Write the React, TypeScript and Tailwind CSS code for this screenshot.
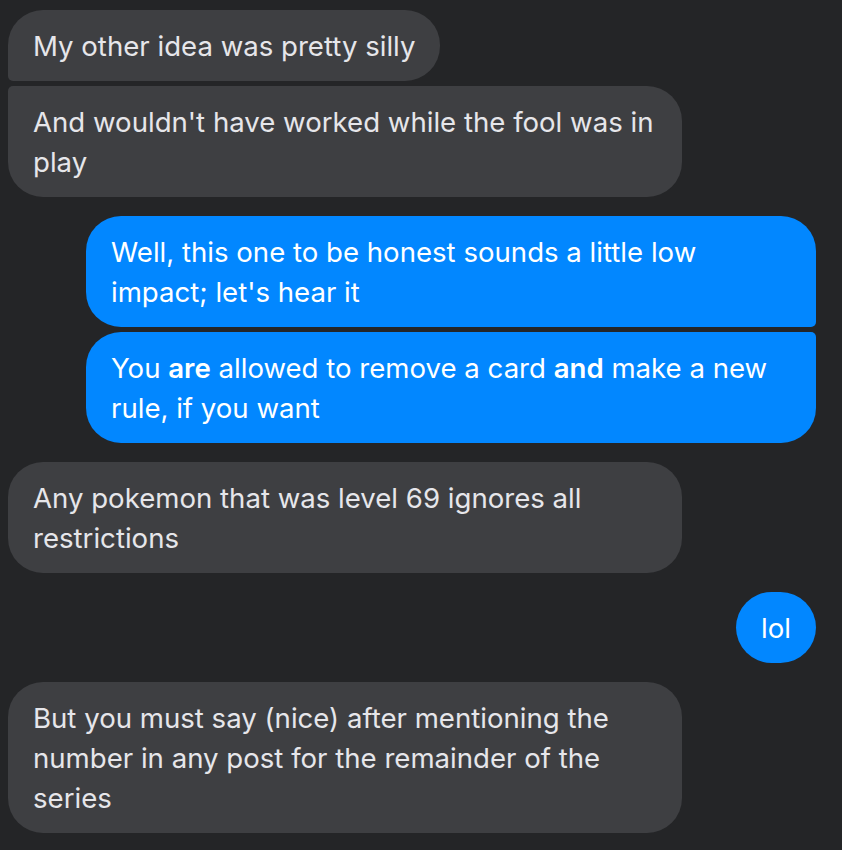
import type { ReactNode } from 'react';

type Msg = {
  from: 'them' | 'me';
  shape: string;
  content: ReactNode;
  gap: string;
};

const messages: Msg[] = [
  {
    from: 'them',
    shape: 'rounded-tl-[35px] rounded-bl-[5px] rounded-r-[35px]',
    content: 'My other idea was pretty silly',
    gap: 'mt-0'
  },
  {
    from: 'them',
    shape: 'rounded-tl-[5px] rounded-bl-[35px] rounded-r-[35px]',
    content: "And wouldn't have worked while the fool was in play",
    gap: 'mt-[5px]'
  },
  {
    from: 'me',
    shape: 'rounded-l-[35px] rounded-tr-[35px] rounded-br-[5px]',
    content: "Well, this one to be honest sounds a little low impact; let's hear it",
    gap: 'mt-[19px]'
  },
  {
    from: 'me',
    shape: 'rounded-l-[35px] rounded-tr-[5px] rounded-br-[35px]',
    content: (
      <>
        You <b className="font-semibold">are</b> allowed to remove a card <b className="font-semibold">and</b> make a new rule, if you want
      </>
    ),
    gap: 'mt-[5px]'
  },
  {
    from: 'them',
    shape: 'rounded-[35px]',
    content: 'Any pokemon that was level 69 ignores all restrictions',
    gap: 'mt-[19px]'
  },
  {
    from: 'me',
    shape: 'rounded-[36px]',
    content: 'lol',
    gap: 'mt-[19px]'
  },
  {
    from: 'them',
    shape: 'rounded-[35px]',
    content: 'But you must say (nice) after mentioning the number in any post for the remainder of the series',
    gap: 'mt-[19px]'
  }
];

export default function App() {
  return (
    <div
      className="min-h-[850px] bg-[#242527] pl-2 pr-[26px] pt-[10px] pb-4"
      style={{ fontFamily: 'Inter, "Noto Sans", sans-serif' }}
    >
      <div className="flex flex-col">
        {messages.map((m, i) => (
          <div
            key={i}
            className={`${m.gap} flex ${m.from === 'me' ? 'justify-end' : 'justify-start'}`}
          >
            <div
              className={`${m.shape} px-[25px] py-[15.5px] text-[27.6px] leading-[40px] ${
                m.from === 'me'
                  ? 'max-w-[730px] bg-[#0287ff] text-white'
                  : 'max-w-[674px] bg-[#3e3f42] text-[#e6e6ea]'
              }`}
            >
              {m.content}
            </div>
          </div>
        ))}
      </div>
    </div>
  );
}
